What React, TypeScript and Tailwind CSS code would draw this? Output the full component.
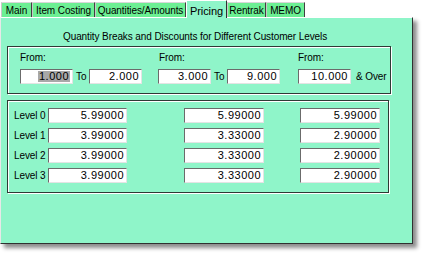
import React from 'react';

const tabs = [
  { label: 'Main', w: 'w-[31px]' },
  { label: 'Item Costing', w: 'w-[63px]' },
  { label: 'Quantities/Amounts', w: 'w-[91px]' },
  { label: 'Pricing', w: 'w-[41px]', active: true },
  { label: 'Rentrak', w: 'w-[39px]' },
  { label: 'MEMO', w: 'w-[39px]' },
];

const levels = [
  { name: 'Level 0', vals: ['5.99000', '5.99000', '5.99000'] },
  { name: 'Level 1', vals: ['3.99000', '3.33000', '2.90000'] },
  { name: 'Level 2', vals: ['3.99000', '3.33000', '2.90000'] },
  { name: 'Level 3', vals: ['3.99000', '3.33000', '2.90000'] },
];

function Field({ value, w, h = 'h-[15px]', selected }: { value: string; w: string; h?: string; selected?: boolean }) {
  return (
    <div
      className={`${w} ${h} bg-white border border-t-[#6b6b6b] border-l-[#6b6b6b] border-b-[#e4e4e4] border-r-[#e4e4e4] flex items-center justify-end pr-[2px] text-[11px] tracking-[0.5px] leading-none`}
    >
      <span className={selected ? 'bg-[#a8a8a8] px-[1px]' : ''}>{value}</span>
    </div>
  );
}

export default function App() {
  return (
    <div className="w-[422px] h-[255px] bg-white font-['Liberation_Sans',Arial,sans-serif] text-[10px] tracking-[-0.1px] text-black overflow-hidden">
      <div className="flex items-end h-[17px] pl-[1px]">
        {tabs.map((t) =>
          t.active ? (
            <div
              key={t.label}
              className={`${t.w} h-[18px] -mb-[1px] relative z-10 bg-[#8ff5c9] border-t border-l border-t-white border-l-white border-r border-r-[#303030] flex items-start justify-center pt-[2px] text-[11px]`}
            >
              {t.label}
            </div>
          ) : (
            <div
              key={t.label}
              className={`${t.w} h-[15px] bg-[#6cef93] border-t border-l border-t-[#d8d8d8] border-l-[#c8c8c8] border-r border-r-[#404040] flex items-center justify-center pt-[1px]`}
            >
              {t.label}
            </div>
          )
        )}
      </div>
      <div className="w-[413px] h-[227px] bg-[#8ff5c9] border-t border-l border-t-white border-l-[#e8e8e8] border-r border-b border-r-[#303030] border-b-[#303030] shadow-[4px_4px_4px_rgba(0,0,0,0.45)] pl-[6px]">
        <div className="pt-[13px] pl-[56px] h-[28px] leading-[12px]">
          Quantity Breaks and Discounts for Different Customer Levels
        </div>
        <div className="w-[384px] h-[48px] border border-[#2e3a34] shadow-[1px_1px_0_#ffffff,inset_1px_1px_0_#ffffff] pl-[12px] pt-[5px] flex">
          <div className="w-[138px] flex flex-col">
            <div className="leading-[12px]">From:</div>
            <div className="flex items-center mt-[5px]">
              <Field value="1.000" w="w-[53px]" selected />
              <span className="w-[16px] pl-[3px]">To</span>
              <Field value="2.000" w="w-[53px]" />
            </div>
          </div>
          <div className="w-[140px] flex flex-col">
            <div className="leading-[12px] pl-[1px]">From:</div>
            <div className="flex items-center mt-[5px]">
              <Field value="3.000" w="w-[53px]" />
              <span className="w-[16px] pl-[3px]">To</span>
              <Field value="9.000" w="w-[53px]" />
            </div>
          </div>
          <div className="flex flex-col">
            <div className="leading-[12px]">From:</div>
            <div className="flex items-center mt-[5px]">
              <Field value="10.000" w="w-[53px]" />
              <span className="pl-[5px]">&amp; Over</span>
            </div>
          </div>
        </div>
        <div className="w-[382px] h-[93px] mt-[6px] border border-[#2e3a34] shadow-[1px_1px_0_#ffffff,inset_1px_1px_0_#ffffff] pl-[6px] pt-[7px] flex flex-col gap-[5px]">
          {levels.map((l) => (
            <div key={l.name} className="flex items-center h-[15px]">
              <span className="w-[34px]">{l.name}</span>
              <Field value={l.vals[0]} w="w-[79px]" h="h-[15px]" />
              <div className="ml-[57px]">
                <Field value={l.vals[1]} w="w-[80px]" h="h-[15px]" />
              </div>
              <div className="ml-[36px]">
                <Field value={l.vals[2]} w="w-[80px]" h="h-[15px]" />
              </div>
            </div>
          ))}
        </div>
      </div>
    </div>
  );
}
